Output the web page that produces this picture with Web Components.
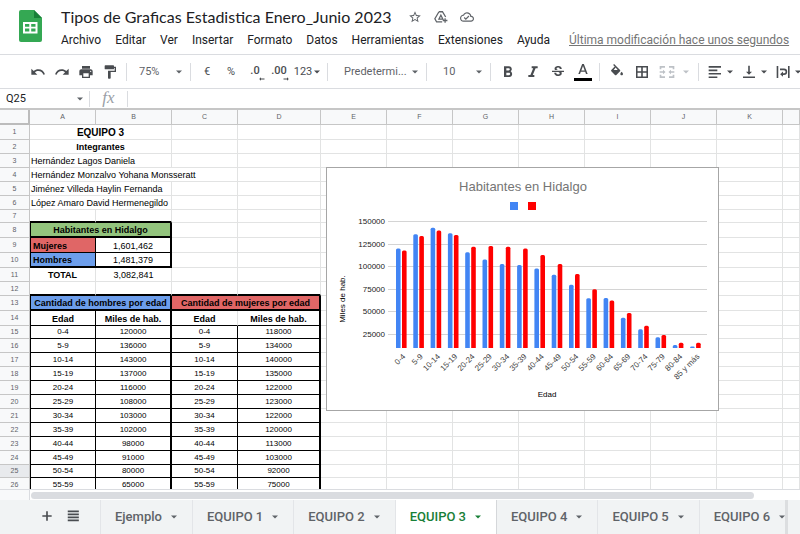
<!DOCTYPE html>
<html lang="es">
<head>
<meta charset="utf-8">
<meta name="viewport" content="width=device-width, initial-scale=1">
<title>Tipos de Graficas Estadistica Enero_Junio 2023</title>
<style>
  html, body { margin: 0; height: 100%; }
  body { font-family: Roboto, "Liberation Sans", sans-serif; color: #202124; background: #fff; overflow: hidden; }
</style>
</head>
<body>
<sheets-app></sheets-app>
<script>
class Base extends HTMLElement {
  connectedCallback() {
    if (this.shadowRoot) return;
    const root = this.attachShadow({ mode: 'open' });
    root.innerHTML = `<style>*{box-sizing:border-box}button,input,select{font:inherit;color:inherit;border:0;background:none;margin:0;padding:0;outline:0;border-radius:0}${this.css()}</style>${this.html()}`;
  }
  css() { return ''; }
  html() { return '<slot></slot>'; }
}

const ICONS = {
  undo: '<path d="M12.5 8c-2.65 0-5.05.99-6.9 2.6L2 7v9h9l-3.62-3.62c1.39-1.16 3.16-1.88 5.12-1.88 3.54 0 6.55 2.31 7.6 5.5l2.37-.78C21.08 11.03 17.15 8 12.5 8z"/>',
  redo: '<path d="M18.4 10.6C16.55 8.99 14.15 8 11.5 8c-4.65 0-8.58 3.03-9.96 7.22L3.9 16c1.05-3.19 4.05-5.5 7.6-5.5 1.95 0 3.73.72 5.12 1.88L13 16h9V7l-3.6 3.6z"/>',
  print: '<path d="M19 8H5c-1.66 0-3 1.34-3 3v6h4v4h12v-4h4v-6c0-1.66-1.34-3-3-3zm-3 11H8v-5h8v5zm3-7c-.55 0-1-.45-1-1s.45-1 1-1 1 .45 1 1-.45 1-1 1zm-1-9H6v4h12V3z"/>',
  paint: '<path d="M18 4V3c0-.55-.45-1-1-1H5c-.55 0-1 .45-1 1v4c0 .55.45 1 1 1h12c.55 0 1-.45 1-1V6h1v4H9v11c0 .55.45 1 1 1h2c.55 0 1-.45 1-1v-9h8V4h-3z"/>',
  bold: '<path d="M16 10.8c1-.7 1.7-1.8 1.7-2.9 0-2.4-1.8-4.4-4.3-4.4H6v16h8.1c2.3 0 4.1-1.9 4.1-4.2 0-1.9-.8-3.6-2.2-4.500zM9.500 6.300h3.500c1 0 1.700.8 1.700 1.700s-.7 1.700-1.700 1.700H9.500zm4 10.400h-4v-3.500h4c1 0 1.700.8 1.700 1.700s-.7 1.800-1.700 1.800z"/>',
  italic: '<path d="M10 3.500v3h2.300l-4.200 10H5v3h9v-3h-2.300l4.200-10H19v-3z"/>',
  strike: '<path d="M7.24 8.75c-.26-.48-.39-1.03-.39-1.67 0-.61.13-1.16.4-1.67.26-.5.63-.93 1.110-1.290.48-.35 1.050-.63 1.700-.83.66-.19 1.390-.29 2.180-.29.81 0 1.540.11 2.210.34.66.22 1.230.54 1.690.94.47.4.83.88 1.080 1.430.25.55.38 1.150.38 1.810h-3.010c0-.31-.05-.59-.15-.85-.09-.27-.24-.49-.44-.68-.2-.19-.45-.33-.75-.44-.3-.1-.66-.16-1.060-.16-.39 0-.74.04-1.030.13-.29.09-.53.21-.72.36-.19.16-.34.34-.44.55-.1.21-.15.43-.15.66 0 .48.25.88.74 1.210.38.25.77.48 1.410.7H7.390c-.05-.08-.11-.17-.15-.25zM21 12v-2H3v2h9.620c.18.070.4.140.55.2.37.17.66.34.87.51.21.17.35.36.43.57.07.2.11.43.11.69 0 .23-.05.45-.14.66-.09.2-.23.38-.42.53-.19.15-.42.26-.71.35-.29.08-.63.13-1.010.13-.43 0-.83-.04-1.180-.13s-.66-.23-.91-.42c-.25-.19-.45-.44-.59-.75-.14-.31-.25-.76-.25-1.210H6.400c0 .55.08 1.130.24 1.580.16.45.37.85.65 1.210.28.35.6.66.98.92.37.26.78.48 1.220.65.44.17.9.3 1.380.39.48.08.96.13 1.440.13.8 0 1.530-.09 2.180-.28s1.210-.45 1.670-.79c.46-.34.82-.77 1.070-1.270s.38-1.070.38-1.710c0-.6-.1-1.140-.31-1.610-.05-.11-.11-.23-.17-.33H21z"/>',
  textcolor: '<path d="M10.700 3L5 18h2.500l1.200-3.200h6.600l1.200 3.200H19L13.300 3h-2.600zm-1.200 9.700L12 5.900l2.500 6.800z"/>',
  fill: '<path d="M16.560 8.940L7.620 0 6.210 1.410l2.380 2.380-5.150 5.150c-.59.59-.59 1.540 0 2.120l5.500 5.500c.29.29.68.44 1.060.44s.77-.15 1.060-.44l5.500-5.500c.59-.58.59-1.530 0-2.120zM7 9L10 5.210 13 9zM19 11.500s-2 2.170-2 3.500c0 1.100.9 2 2 2s2-.9 2-2c0-1.330-2-3.500-2-3.500z"/>',
  borders: '<path d="M3 3v18h18V3H3zm7.800 15.700H5.300v-5.500h5.500v5.500zm0-7.900H5.300V5.300h5.500v5.500zm7.900 7.900h-5.500v-5.500h5.500v5.500zm0-7.900h-5.500V5.300h5.500v5.500z"/>',
  merge: '<path d="M1 8V3h8v2.500H3.500V8zm14-5h8v5h-2.500V5.500H15zM1 16v5h8v-2.500H3.500V16zm19.500 0v2.500H15V21h8v-5zM1 11h5V8.500L9.800 12 6 15.500V13H1zm22 0h-5V8.500L14.200 12l3.800 3.500V13h5z"/>',
  align: '<path d="M2.500 3h18.500v2.500H2.500zm0 5.200h13v2.500h-13zm0 5.200H21v2.500H2.500zm0 5.200h13v2.500h-13z"/>',
  valign: '<path d="M16.500 11.500h-3.300V2.500h-2.400v9H7.500l4.500 4.700zM3 18.600V21h18v-2.400z"/>',
  wrap: '<path d="M2.500 3h2.400v18H2.500zm17 0h2.400v18h-2.400zM7.500 6.800h6a4.800 4.800 0 0 1 0 9.600H12v2.700L7.700 15.200 12 11.400V14h1.500a2.400 2.400 0 0 0 0-4.800h-6z"/>',
  star: '<path d="M22 9.240l-7.190-.62L12 2 9.190 8.630 2 9.240l5.460 4.730L5.820 21 12 17.270 18.180 21l-1.630-7.030L22 9.240zM12 15.400l-3.760 2.270 1-4.280-3.320-2.880 4.380-.38L12 6.100l1.710 4.040 4.380.38-3.320 2.880 1 4.280L12 15.400z"/>',
  drive: '<path d="M8.500 3h6l5.500 9M8.500 3L1.500 15 4.500 20.500H14M8.500 15.500l3.300-6.500 3.300 6.500zM19 14v8m-4-4h8" fill="none" stroke="currentColor" stroke-width="2.200"/>',
  cloud: '<path d="M19.350 10.040C18.670 6.590 15.640 4 12 4 9.110 4 6.600 5.640 5.350 8.040 2.340 8.360 0 10.910 0 14c0 3.310 2.690 6 6 6h13c2.760 0 5-2.240 5-5 0-2.640-2.050-4.780-4.650-4.960zM19 18H6c-2.210 0-4-1.790-4-4 0-2.050 1.530-3.760 3.560-3.970l1.070-.11.5-.95C8.080 7.140 9.940 6 12 6c2.620 0 4.880 1.860 5.390 4.430l.3 1.500 1.530.11c1.560.1 2.780 1.410 2.780 2.960 0 1.650-1.350 3-3 3zm-9-3.820l-2.090-2.090L6.500 13.500 10 17l6.010-6.010-1.410-1.410z"/>',
  add: '<path d="M20 13.400h-6.600V20h-2.800v-6.600H4v-2.800h6.600V4h2.800v6.600H20z"/>',
  list: '<path d="M3 2.500h19v3H3zm0 5.200h19v3H3zm0 5.200h19v3H3zm0 5.200h19v3H3z"/>',
  down: '<path d="M0 6h24L12 18z"/>',
  left: '<path d="M22 10H8V5l-7 7 7 7v-5h14z"/>',
  right: '<path d="M2 10h14V5l7 7-7 7v-5H2z"/>'
};

/* <ui-icon name size> */
customElements.define('ui-icon', class extends Base {
  css() { const s = this.getAttribute('size') || 16; return `:host{display:inline-block;flex:none;width:${s}px;height:${s}px}svg{display:block;width:100%;height:100%;fill:currentColor}`; }
  html() { return `<svg viewBox="0 0 24 24" aria-hidden="true">${ICONS[this.getAttribute('name')]}</svg>`; }
});

customElements.define('sheets-logo', class extends Base {
  css() { return ':host{display:block;width:23px;height:32px}svg{display:block}'; }
  html() { return `<svg width="23" height="32" viewBox="0 0 23 32" aria-label="Hojas de cálculo"><path fill="#34a853" d="M2 0h13l8 8v22a2 2 0 0 1-2 2H2a2 2 0 0 1-2-2V2a2 2 0 0 1 2-2z"/><path fill="#188038" d="M15 0l8 8h-8z"/><path fill="#fff" fill-rule="evenodd" d="M4 12h14.500v11.500H4zM6 14v2.700h4.300V14zm6.200 0v2.700h4.300V14zM6 18.600v2.800h4.300v-2.800zm6.200 0v2.800h4.300v-2.800z"/></svg>`; }
});

customElements.define('doc-header', class extends Base {
  css() { return `
    :host{display:flex;height:55px;padding-left:19px;border-bottom:1px solid #dadce0;white-space:nowrap}
    sheets-logo{margin:10px 19px 0 0;flex:none}
    .main{flex:1;min-width:0}
    .row{display:flex;align-items:center}
    .title{height:28px;padding-top:6px;gap:12px;color:#5f6368}
    h1{margin:0 5px 0 0;font:400 16px/24px var(--title-font);color:#202124}
    .title button{display:flex}
    nav{gap:14px;height:24px;font-size:12px;line-height:16px;color:#202124}
    a{margin-left:5px;color:#757575;text-decoration:underline}`; }
  html() { return `
    <sheets-logo></sheets-logo>
    <div class="main">
      <div class="row title"><h1>Tipos de Graficas Estadistica Enero_Junio 2023</h1>
        <button aria-label="Destacar"><ui-icon name="star" size="14"></ui-icon></button>
        <button aria-label="Mover"><ui-icon name="drive" size="14"></ui-icon></button>
        <button aria-label="Estado del documento"><ui-icon name="cloud" size="14"></ui-icon></button></div>
      <nav class="row">${['Archivo','Editar','Ver','Insertar','Formato','Datos','Herramientas','Extensiones','Ayuda'].map(t => `<button>${t}</button>`).join('')}<a href="#historial">Última modificación hace unos segundos</a></nav>
    </div>`; }
});

/* drop-down with its own caret */
customElements.define('tool-select', class extends Base {
  css() { return `:host{display:flex;align-items:center;height:24px;width:var(--w);padding:0 4px 0 var(--pl,12px);color:#5f6368}
    select{appearance:none;flex:1;min-width:0;font-size:11px;line-height:16px}
    ui-icon{pointer-events:none}`; }
  html() { return `<select aria-label="${this.getAttribute('label')}"><option>${this.getAttribute('value')}</option></select><ui-icon name="down" size="6"></ui-icon>`; }
});

customElements.define('tool-bar', class extends Base {
  css() { return `
    :host{display:flex;align-items:center;height:34px;padding-left:26px;border-bottom:1px solid #dadce0;color:#494c50;overflow:hidden}
    button{flex:none;width:24px;height:24px;display:flex;align-items:center;justify-content:center;font-size:11px;line-height:16px}
    tool-select{flex:none}
    hr{flex:none;width:1px;height:18px;margin:0 4px;border:0;background:#dadce0}
    .w{width:25px}
    .menu{width:32px;gap:2px}
    .wide{width:34px;gap:4px}
    .off{width:40px;gap:8px;color:#bdc1c6}
    .dec{flex-direction:column;font-weight:500;padding-top:4px}
    .dec span{line-height:10px}
    .dec ui-icon{align-self:flex-end;margin-right:2px}
    .color{flex-direction:column}
    .color i{width:18px;height:3px;background:#000}`; }
  html() {
    const b = (n, l, c = '') => `<button class="${c}" aria-label="${l}"><ui-icon name="${n}"></ui-icon></button>`;
    const m = (n, l, c = '') => `<button class="wide ${c}" aria-label="${l}"><ui-icon name="${n}"></ui-icon><ui-icon name="down" size="6"></ui-icon></button>`;
    return b('undo','Deshacer') + b('redo','Rehacer') + b('print','Imprimir') + b('paint','Copiar formato') + '<hr>' +
      '<tool-select style="--w:55px;--pl:8px" label="Zoom" value="75%"></tool-select><hr>' +
      '<button>€</button><button>%</button>' +
      '<button class="dec" aria-label="Menos decimales"><span>.0</span><ui-icon name="left" size="6"></ui-icon></button>' +
      '<button class="dec" aria-label="Más decimales"><span>.00</span><ui-icon name="right" size="6"></ui-icon></button>' +
      '<button class="menu"><span>123</span><ui-icon name="down" size="6"></ui-icon></button><hr>' +
      '<tool-select style="--w:90px" label="Fuente" value="Predetermi..."></tool-select><hr>' +
      '<tool-select style="--w:55px" label="Tamaño" value="10"></tool-select><hr>' +
      b('bold','Negrita','w') + b('italic','Cursiva','w') + b('strike','Tachado','w') +
      `<button class="w color" aria-label="Color del texto"><ui-icon name="textcolor" size="16"></ui-icon><i></i></button><hr>` +
      b('fill','Color de relleno','w') + b('borders','Bordes','w') + m('merge','Combinar','off') + '<hr>' +
      m('align','Alineación horizontal') + m('valign','Alineación vertical') + m('wrap','Ajuste de texto');
  }
});

customElements.define('formula-bar', class extends Base {
  css() { return `
    :host{display:flex;align-items:center;height:19px}
    .name{width:71px;padding-left:6px;font-size:11px;line-height:16px;color:#202124}
    button{width:18px;height:18px;display:flex;align-items:center;justify-content:center;color:#5f6368}
    hr{width:1px;height:16px;margin:0;border:0;background:#dadce0}
    label{width:37px;padding-bottom:2px;text-align:center;font:italic 17px/16px "Liberation Serif",serif;color:#9aa0a6}
    .fx{flex:1;min-width:0;padding-left:6px;font-size:11px}`; }
  html() { return `<input class="name" value="Q25" aria-label="Cuadro de nombres"><button aria-label="Intervalos"><ui-icon name="down" size="6"></ui-icon></button><hr><label for="fx">fx</label><hr><input class="fx" id="fx">`; }
});

const AGES = ['0-4','5-9','10-14','15-19','20-24','25-29','30-34','35-39','40-44','45-49','50-54','55-59','60-64','65-69','70-74','75-79','80-84','85 y más'];
const MEN = [120000,136000,143000,137000,116000,108000,103000,102000,98000,91000,80000,65000,65500,43600,30700,22000,13400,11600];
const WOMEN = [118000,134000,140000,135000,122000,123000,122000,120000,113000,103000,92000,75000,62500,48800,34600,24500,15800,15800];

customElements.define('bar-chart', class extends Base {
  css() { return `:host{display:block;background:#fff;border:1px solid #a6a6a6}
    svg{display:block;font-family:"Liberation Sans",Arial,sans-serif;font-size:8px}
    .t{font-size:13px;fill:#757575}.y{fill:#222}.c{fill:#444}.b{fill:#000}`; }
  html() {
    const y = v => 167 - (v - 25000) / 25000 * 22.6, base = 180;
    let s = '';
    for (let v = 25000; v <= 150000; v += 25000)
      s += `<path d="M61 ${Math.round(y(v)) - .5}H380" stroke="#d4d4d4"/><text class="y" x="58" y="${Math.round(y(v)) + 2}" text-anchor="end">${v}</text>`;
    AGES.forEach((a, i) => {
      const x = 69 + i * 17.300;
      [[MEN, '#4285f4', 0], [WOMEN, '#ff0000', 6]].forEach(([d, c, o]) => {
        const t = y(d[i]) - .5, r = Math.min(1.500, base - t);
        s += `<path fill="${c}" d="M${x + o} ${base}V${t + r}q0-${r} ${r}-${r}h${4.600 - 2 * r}q${r} 0 ${r} ${r}V${base}z"/>`;
      });
      s += `<text class="c" text-anchor="end" transform="translate(${x + 10} ${base + 9}) rotate(-45)">${a}</text>`;
    });
    return `<svg width="391" height="242" viewBox="0 0 391 242" role="img" aria-label="Habitantes en Hidalgo">
      <text class="t" x="196" y="23" text-anchor="middle">Habitantes en Hidalgo</text>
      <path fill="#4285f4" d="M183 34h8v8h-8z"/><path fill="#f00" d="M201 34h8v8h-8z"/>${s}
      <text class="b" x="220" y="229" text-anchor="middle">Edad</text>
      <text class="b" text-anchor="middle" transform="translate(18 131) rotate(-90)">Miles de hab.</text></svg>`;
  }
});

customElements.define('sheet-grid', class extends Base {
  css() { return `
    :host{display:block;position:relative;overflow:hidden;border-top:2px solid #c6c6c6;font-family:"Liberation Sans",Arial,sans-serif}
    table{table-layout:fixed;border-collapse:separate;border-spacing:0;width:100%;min-width:790px}
    td,th{padding:0;height:var(--h);line-height:12px;font-size:9px;font-weight:400;white-space:nowrap;overflow:hidden;vertical-align:bottom;text-align:center;border:solid #e2e3e3;border-width:0 1px 1px 0;color:#000}
    th{background:#f8f9fa;color:#5f6368;border-color:#c6c6c6;font-size:7px;vertical-align:middle}
    th.corner{border-width:0 2px 2px 0;border-color:#bcbcbc}
    th.sel{background:#e8eaed}
    .l{text-align:left;padding-left:1px}
    .in{padding-left:2px}
    .b{font-weight:700}
    .big{font-size:10px}
    .n{font-size:8px}
    .kb{border-bottom-color:#000}.kr{border-right-color:#000}
    .b2{border-bottom:2px solid #000}.r2{border-right:2px solid #000}
    .l1{border-left:1px solid #000}
    .green{background:#93c47d}.red{background:#e06666}.blue{background:#6d9eeb}
    bar-chart{position:absolute;left:326px;top:57px}`; }
  html() {
    const H = [15,14,14,14,14,14,13,15,15,15,14,14,15,15,13,14,14,14,14,14,14,14,14,14,13,14];
    const c = (t, k = '', span = 1) => ({ t, k, span });
    const R = {
      1: [c('EQUIPO 3', 'b big', 2)], 2: [c('Integrantes', 'b', 2)],
      3: [c('Hernández Lagos Daniela', 'l', 2)], 4: [c('Hernández Monzalvo Yohana Monsseratt', 'l', 3)],
      5: [c('Jiménez Villeda Haylin Fernanda', 'l', 2)], 6: [c('López Amaro David Hermenegildo', 'l', 2)],
      7: [c('', 'b2'), c('', 'b2')],
      8: [c('Habitantes en Hidalgo', 'b green l1 b2 r2', 2)],
      9: [c('Mujeres', 'b l in red l1 kr kb'), c('1,601,462', 'r2 kb')],
      10: [c('Hombres', 'b l in blue l1 kr b2'), c('1,481,379', 'r2 b2')],
      11: [c('TOTAL', 'b'), c('3,082,841')],
      12: [c('', 'b2'), c('', 'b2'), c('', 'b2'), c('', 'b2')],
      13: [c('Cantidad de hombres por edad', 'b blue l1 b2 r2', 2), c('Cantidad de mujeres por edad', 'b red b2 r2', 2)],
      14: [c('Edad', 'b l1 kr kb'), c('Miles de hab.', 'b r2 kb'), c('Edad', 'b kb'), c('Miles de hab.', 'b r2 kb')]
    };
    for (let i = 0; i < 12; i++)
      R[15 + i] = [c(AGES[i], 'n l1 kr kb'), c(MEN[i], 'n r2 kb'), c(AGES[i], 'n kr kb'), c(WOMEN[i], 'n r2 kb')];
    const W = [66, 76, 66, 83, 66, 66, 66, 66, 66, 66, 66];
    let s = '<table><colgroup><col style="width:30px">' + W.map(w => `<col style="width:${w}px">`).join('') + '<col></colgroup><tr style="--h:15px"><th class="corner"></th>' +
      'ABCDEFGHIJK'.split('').map(l => `<th scope="col">${l}</th>`).join('') + '<th></th></tr>';
    H.forEach((h, i) => {
      const cells = R[i + 1] || [], used = cells.reduce((a, x) => a + x.span, 0);
      s += `<tr style="--h:${h}px"><th scope="row" class="${i === 24 ? 'sel' : ''}">${i + 1}</th>` +
        cells.map(x => `<td class="${x.k}" colspan="${x.span}">${x.t}</td>`).join('') + '<td></td>'.repeat(12 - used) + '</tr>';
    });
    return s + '</table><bar-chart></bar-chart>';
  }
});

customElements.define('scroll-strip', class extends Base {
  css() { return `:host{display:flex;height:11px;border-top:1px solid #dadce0;background:#fff}
    .edge{width:30px;background:#f8f9fa;border-right:1px solid #dadce0}
    .track{flex:1;padding:2px 0 1px 1px}
    .thumb{width:94%;height:7px;border-radius:4px;background:#dadce0}`; }
  html() { return '<div class="edge"></div><div class="track"><div class="thumb"></div></div>'; }
});

customElements.define('sheet-tab', class extends Base {
  css() { return `:host{display:block;flex:none;border-right:1px solid #e3e5e8;color:#5f6368}
    :host([active]){background:#fff;color:#188038;border-color:#d5d7da}
    button{height:100%;display:flex;align-items:center;gap:9px;padding:0 15px 0 14px;font:500 13px/16px var(--tab-font);white-space:nowrap}`; }
  html() { return '<button><slot></slot><ui-icon name="down" size="6"></ui-icon></button>'; }
});

customElements.define('sheet-tabs', class extends Base {
  css() { return `:host{display:flex;height:34px;background:#f1f3f4;color:#5f6368}
    .tools{flex:none;width:101px;display:flex;gap:3px;padding:0 15px 0 35px;border-right:1px solid #e3e5e8;color:#494c50}
    .tools button{width:24px;height:32px;display:flex;align-items:center;justify-content:center}
    .tabs{flex:1;min-width:0;display:flex;overflow:hidden}
    .end{width:15px;border-left:3px solid #dcdee0}`; }
  html() { return `<div class="tools"><button aria-label="Añadir hoja"><ui-icon name="add" size="14"></ui-icon></button><button aria-label="Todas las hojas"><ui-icon name="list" size="14"></ui-icon></button></div>
    <div class="tabs"><sheet-tab>Ejemplo</sheet-tab>${[1,2,3,4,5,6].map(n => `<sheet-tab${n === 3 ? ' active' : ''}>EQUIPO ${n}</sheet-tab>`).join('')}</div><div class="end"></div>`; }
});

customElements.define('sheets-app', class extends Base {
  css() { return `:host{display:flex;flex-direction:column;height:100vh;--title-font:Lato,sans-serif;--tab-font:Roboto,sans-serif}
    doc-header,tool-bar,formula-bar,scroll-strip,sheet-tabs{flex:none}
    sheet-grid{flex:1;min-height:0}`; }
  html() { return '<doc-header></doc-header><tool-bar></tool-bar><formula-bar></formula-bar><sheet-grid></sheet-grid><scroll-strip></scroll-strip><sheet-tabs></sheet-tabs>'; }
});
</script>
</body>
</html>
